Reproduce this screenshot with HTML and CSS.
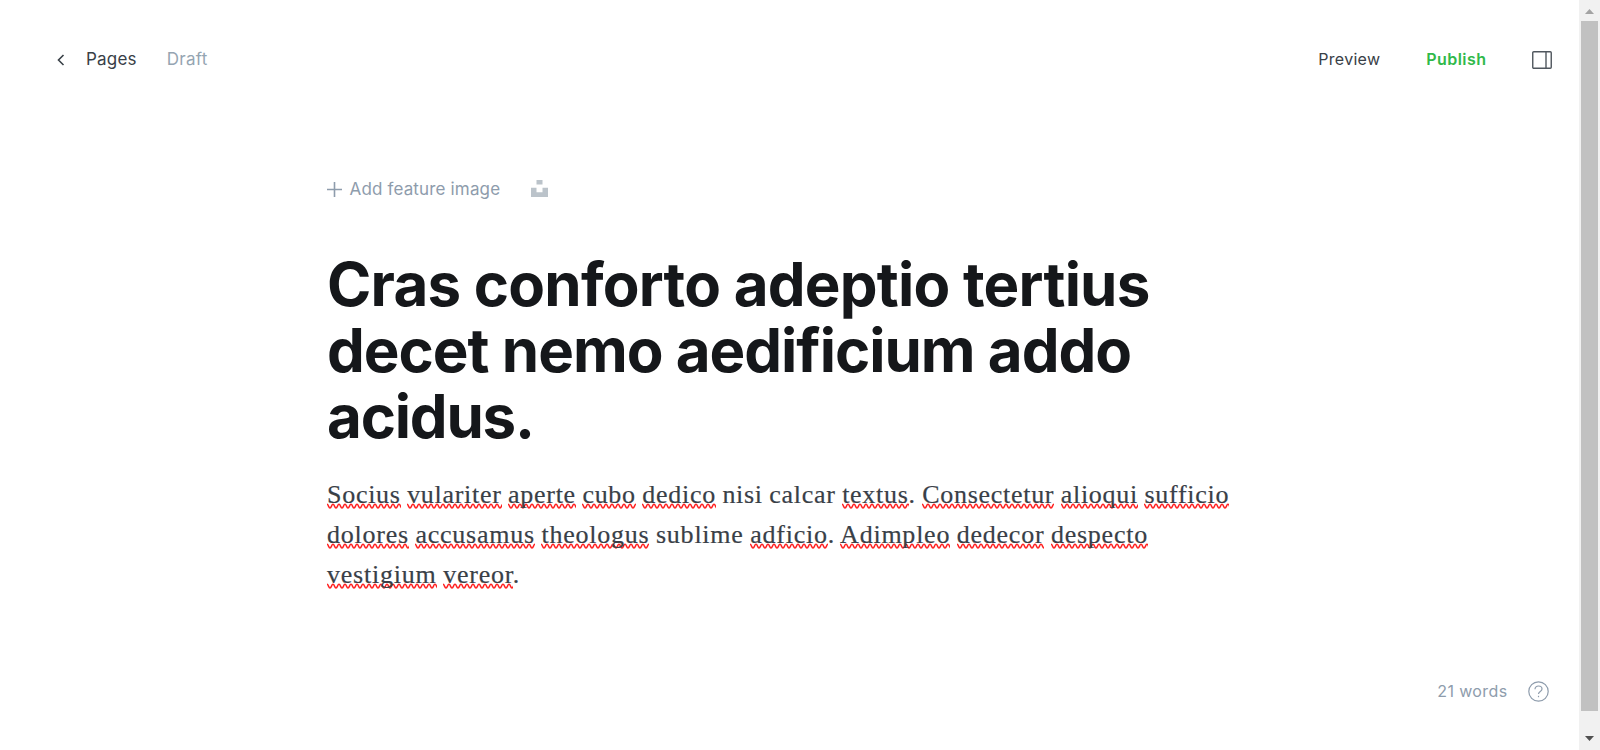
FILE: index.html
```html
<!DOCTYPE html>
<html lang="en">
<head>
<meta charset="utf-8">
<title>Editor</title>
<link rel="stylesheet" href="styles.css">
</head>
<body>
<div class="app">
  <main class="editor">
    <header class="bar">
      <nav class="crumbs">
        <svg class="back" width="8" height="12" viewBox="0 0 8 12"><path d="M6.5 1 1.5 6l5 5"/></svg>
        <span class="pages">Pages</span>
        <span class="draft">Draft</span>
      </nav>
      <div class="actions">
        <span class="preview">Preview</span>
        <span class="publish">Publish</span>
        <svg class="panel" width="20" height="18" viewBox="0 0 20 18"><rect x=".75" y=".75" width="18.5" height="16.5" rx="1"/><path d="M14 1v16"/></svg>
      </div>
    </header>
    <section class="content">
      <div class="feature">
        <svg class="plus" width="15" height="15" viewBox="0 0 15 15"><path d="M7.5 0v15M0 7.5h15"/></svg>
        <span class="add">Add feature image</span>
        <svg class="unsplash" width="17" height="17" viewBox="0 0 17 17"><path d="M5.5 0h6v4.5h-6zM0 7.8h5.5v4.4h6V7.8H17V17H0z"/></svg>
      </div>
      <h1 class="title">Cras conforto adeptio tertius<br><span class="title-b">decet nemo aedificium addo</span><br><span class="title-c">acidus.</span></h1>
      <div class="text">
        <p class="line line-a"><u>Socius</u> <u>vulariter</u> <u>aperte</u> <u>cubo</u> <u>dedico</u> nisi calcar <u>textus</u>. <u>Consectetur</u> <u>alioqui</u> <u>sufficio</u></p>
        <p class="line line-b"><u>dolores</u> <u>accusamus</u> <u>theologus</u> sublime <u>adficio</u>. <u>Adimpleo</u> <u>dedecor</u> <u>despecto</u></p>
        <p class="line line-c"><u>vestigium</u> <u>vereor</u>.</p>
      </div>
    </section>
    <footer class="status">
      <span class="count">21 words</span>
      <svg class="help" width="21" height="21" viewBox="0 0 21 21"><circle cx="10.5" cy="10.5" r="9.7"/><path d="M7 8.2c0-2 1.5-3.2 3.5-3.2s3.5 1.2 3.5 3c0 2.5-3.5 2.4-3.5 5"/><path d="M10.5 14.8v1.4"/></svg>
    </footer>
  </main>
  <aside class="scroll">
    <svg class="arrow arrow-up" width="9" height="5" viewBox="0 0 9 5"><path d="M4.5 0 9 5H0z"/></svg>
    <div class="thumb"></div>
    <svg class="arrow" width="9" height="5" viewBox="0 0 9 5"><path d="M0 0h9L4.5 5z"/></svg>
  </aside>
</div>
</body>
</html>
```
FILE: styles.css
```css
body { margin: 0; background: #fff; font-family: Inter, sans-serif; overflow: hidden; }
.app { display: flex; height: 750px; }
.editor { flex: 1; display: flex; flex-direction: column; }
svg { display: block; fill: none; flex: none; }
.bar { display: flex; justify-content: space-between; align-items: center; height: 119px; padding: 0 27px 0 57px; font-size: 17px; color: #394047; }
.crumbs, .actions { display: flex; align-items: center; }
.crumbs span, .actions span { padding-bottom: 2px; }
.back { stroke: #394047; stroke-width: 1.6; }
.pages { margin-left: 21px; letter-spacing: .2px; }
.draft { margin-left: 30px; color: #95a5b2; letter-spacing: .3px; }
.publish { margin-left: 46px; color: #30b94a; font-weight: 600; letter-spacing: .45px; }
.preview { letter-spacing: .28px; }
.preview, .publish { font-size: 16px; }
.panel { margin-left: 45.5px; stroke: #50575e; stroke-width: 1.4; }
.content { flex: 1; padding: 56px 0 0 327px; }
.feature { display: flex; align-items: center; height: 28px; font-size: 17px; color: #8e9cac; }
.plus { stroke: #8e9cac; stroke-width: 1.6; }
.add { margin-left: 7.5px; letter-spacing: .16px; }
.unsplash { margin: 0 0 2px 31px; fill: #bbc3ca; }
.title { margin: 48px 0 0; font-size: 60px; line-height: 66px; font-weight: 700; letter-spacing: -.77px; color: #15171a; white-space: nowrap; }
.title-b { letter-spacing: -1px; }
.title-c { letter-spacing: -1.2px; }
.text { margin-top: 26px; }
.line { margin: 0; font-family: Georgia, "Liberation Serif", serif; font-size: 26px; line-height: 40px; word-spacing: -.7px; color: #394047; -webkit-text-stroke: .2px #394047; white-space: nowrap; }
.line-a { letter-spacing: .71px; }
.line-b { letter-spacing: .76px; }
.line-c { letter-spacing: .78px; }
.line u { text-decoration: none; background: url("data:image/svg+xml,%3Csvg xmlns='http://www.w3.org/2000/svg' width='6' height='6'%3E%3Cpath d='M-3 5C-1.5 5 -1.5 1.2 0 1.2S1.5 5 3 5 4.5 1.2 6 1.2 7.5 5 9 5' fill='none' stroke='%23ff2020' stroke-width='1.5'/%3E%3C/svg%3E") left bottom / 6px 6px repeat-x; }
.status { display: flex; justify-content: flex-end; align-items: center; height: 36px; padding: 0 30.5px 41px 0; font-size: 16px; color: #8e9cac; }
.count { letter-spacing: .38px; }
.help { margin-left: 20px; stroke: #8e9cac; stroke-width: 1.2; }
.scroll { width: 21px; background: #f1f1f1; display: flex; flex-direction: column; align-items: center; }
.arrow { fill: #505050; }
.arrow-up { fill: #a3a3a3; margin-top: 9px; }
.thumb { width: 17px; height: 690px; margin: 7px 0 25px; background: #c1c1c1; }
```
